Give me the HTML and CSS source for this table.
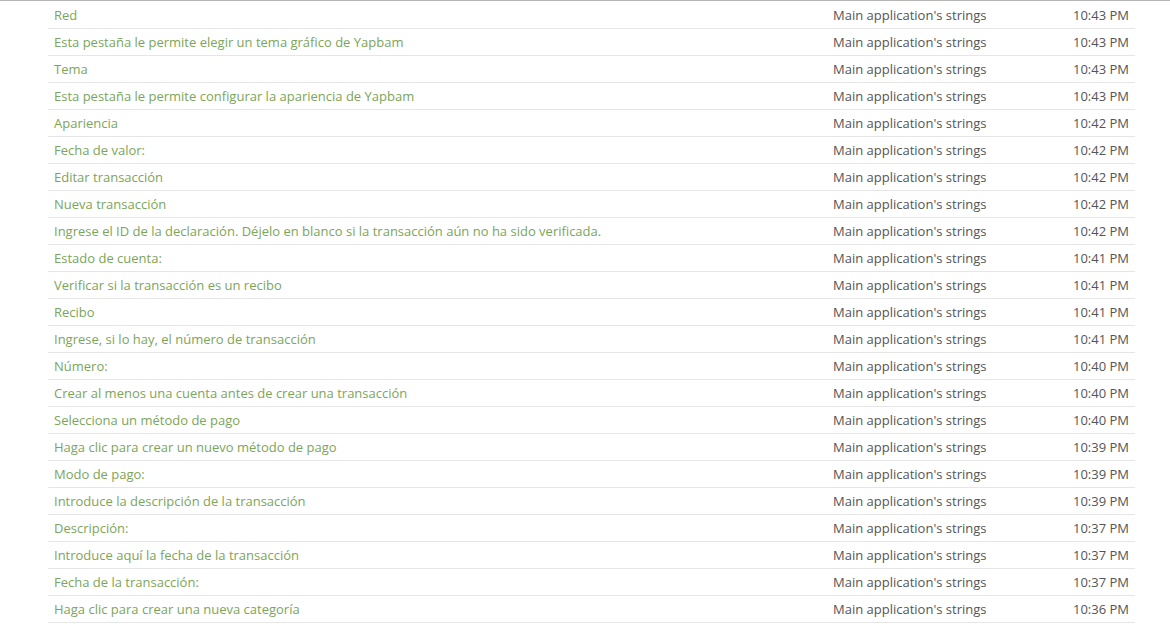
FILE: index.html
```html
<!DOCTYPE html>
<html>
<head>
<meta charset="utf-8">
<link rel="stylesheet" href="styles.css">
</head>
<body>
<div class="page">
  <div class="list">
    <div class="row"><span class="msg">Red</span><span class="mod">Main application's strings</span><span class="time">10:43 PM</span></div>
    <div class="row"><span class="msg">Esta pestaña le permite elegir un tema gráfico de Yapbam</span><span class="mod">Main application's strings</span><span class="time">10:43 PM</span></div>
    <div class="row"><span class="msg">Tema</span><span class="mod">Main application's strings</span><span class="time">10:43 PM</span></div>
    <div class="row"><span class="msg">Esta pestaña le permite configurar la apariencia de Yapbam</span><span class="mod">Main application's strings</span><span class="time">10:43 PM</span></div>
    <div class="row"><span class="msg">Apariencia</span><span class="mod">Main application's strings</span><span class="time">10:42 PM</span></div>
    <div class="row"><span class="msg">Fecha de valor:</span><span class="mod">Main application's strings</span><span class="time">10:42 PM</span></div>
    <div class="row"><span class="msg">Editar transacción</span><span class="mod">Main application's strings</span><span class="time">10:42 PM</span></div>
    <div class="row"><span class="msg">Nueva transacción</span><span class="mod">Main application's strings</span><span class="time">10:42 PM</span></div>
    <div class="row"><span class="msg">Ingrese el ID de la declaración. Déjelo en blanco si la transacción aún no ha sido verificada.</span><span class="mod">Main application's strings</span><span class="time">10:42 PM</span></div>
    <div class="row"><span class="msg">Estado de cuenta:</span><span class="mod">Main application's strings</span><span class="time">10:41 PM</span></div>
    <div class="row"><span class="msg">Verificar si la transacción es un recibo</span><span class="mod">Main application's strings</span><span class="time">10:41 PM</span></div>
    <div class="row"><span class="msg">Recibo</span><span class="mod">Main application's strings</span><span class="time">10:41 PM</span></div>
    <div class="row"><span class="msg">Ingrese, si lo hay, el número de transacción</span><span class="mod">Main application's strings</span><span class="time">10:41 PM</span></div>
    <div class="row"><span class="msg">Número:</span><span class="mod">Main application's strings</span><span class="time">10:40 PM</span></div>
    <div class="row"><span class="msg">Crear al menos una cuenta antes de crear una transacción</span><span class="mod">Main application's strings</span><span class="time">10:40 PM</span></div>
    <div class="row"><span class="msg">Selecciona un método de pago</span><span class="mod">Main application's strings</span><span class="time">10:40 PM</span></div>
    <div class="row"><span class="msg">Haga clic para crear un nuevo método de pago</span><span class="mod">Main application's strings</span><span class="time">10:39 PM</span></div>
    <div class="row"><span class="msg">Modo de pago:</span><span class="mod">Main application's strings</span><span class="time">10:39 PM</span></div>
    <div class="row"><span class="msg">Introduce la descripción de la transacción</span><span class="mod">Main application's strings</span><span class="time">10:39 PM</span></div>
    <div class="row"><span class="msg">Descripción:</span><span class="mod">Main application's strings</span><span class="time">10:37 PM</span></div>
    <div class="row"><span class="msg">Introduce aquí la fecha de la transacción</span><span class="mod">Main application's strings</span><span class="time">10:37 PM</span></div>
    <div class="row"><span class="msg">Fecha de la transacción:</span><span class="mod">Main application's strings</span><span class="time">10:37 PM</span></div>
    <div class="row"><span class="msg">Haga clic para crear una nueva categoría</span><span class="mod">Main application's strings</span><span class="time">10:36 PM</span></div>
  </div>
</div>
</body>
</html>
```

FILE: styles.css
```css
html, body {
  margin: 0;
  padding: 0;
  background: #ffffff;
}
body {
  font-family: "Open Sans", "Liberation Sans", sans-serif;
  font-size: 13px;
  overflow: hidden;
}
.page {
  border-top: 1px solid #b4b4b4;
  padding-top: 1px;
  padding-left: 48px;
}
.list {
  width: 1087px;
}
.row {
  display: grid;
  grid-template-columns: 779px 208px 100px;
  height: 26px;
  align-items: center;
  border-bottom: 1px solid #e6e6e6;
}
.msg {
  color: #7ca55a;
  padding-left: 6px;
  white-space: nowrap;
}
.mod {
  color: #555555;
  padding-left: 6px;
  white-space: nowrap;
}
.time {
  color: #555555;
  text-align: right;
  padding-right: 6px;
  white-space: nowrap;
}
```
